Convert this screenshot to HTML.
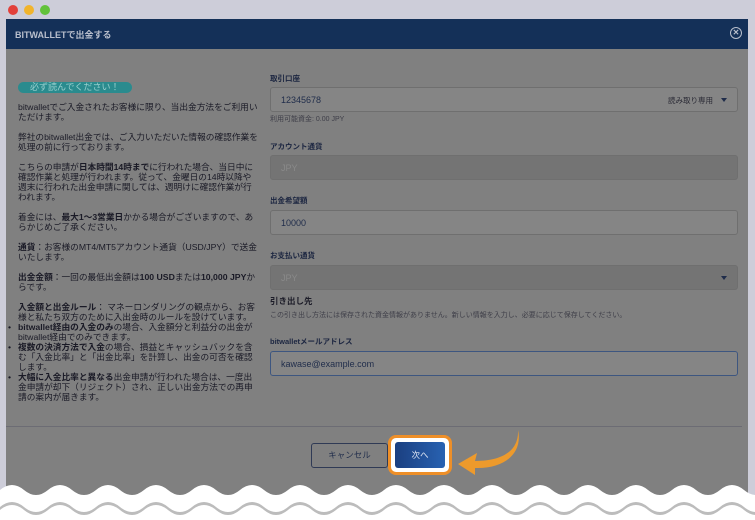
<!DOCTYPE html>
<html><head><meta charset="utf-8"><style>
*{margin:0;padding:0;box-sizing:border-box}
body{width:755px;height:520px;background:#cdcdd9;font-family:"Liberation Sans","Noto Sans CJK JP",sans-serif;position:relative;overflow:hidden;color:#1c1c28}
.dot{position:absolute;top:5px;width:10px;height:10px;border-radius:50%}
.win{position:absolute;left:6px;top:19px;width:742px;height:501px;background:#808080}
.hdr{position:absolute;left:0;top:0;width:742px;height:30px;background:#143058;color:#b9bfcc;font-size:9px;font-weight:bold;padding:9px 9px}
.close{position:absolute;right:6px;top:8px;width:12px;height:12px;border:1px solid #b9bfcc;border-radius:50%;color:#b9bfcc;font-size:8px;line-height:10px;text-align:center}
.left{position:absolute;left:12px;top:63px;width:242px;font-size:8.7px;line-height:10px;color:#1a1a26}
.left p{margin-bottom:10px}
.badge{display:inline-block;background:#2a8b8e;color:#9ad0cf;border-radius:7px;padding:0 12px;font-size:9px;line-height:11px;margin-bottom:9px}
ul{list-style:none}
li{position:relative}
li:before{content:"•";position:absolute;left:-10px}
.lbl{position:absolute;left:264px;font-size:7.5px;font-weight:bold;color:#1b2540}
.in{position:absolute;left:264px;width:468px;height:25px;background:#858585;border:1px solid #6f6f6f;border-radius:3px;font-size:9px;color:#1f2c4a;padding:7px 10px}
.dis{background:#747474;color:#8a8a8a}
.car{position:absolute;right:10px;top:10px;border:3.5px solid transparent;border-top:4px solid #1f2c4a}
.sm{position:absolute;left:264px;font-size:7.5px;color:#3e3e48}
</style></head><body>
<div class="dot" style="left:8px;background:#e2403a"></div>
<div class="dot" style="left:24px;background:#f1b42c"></div>
<div class="dot" style="left:40px;background:#62c23a"></div>
<div class="win">
<div class="hdr">BITWALLETで出金する<div class="close">✕</div></div>
<div class="left">
<div class="badge">必ず読んでください！</div>
<p>bitwalletでご入金されたお客様に限り、当出金方法をご利用いただけます。</p>
<p>弊社のbitwallet出金では、ご入力いただいた情報の確認作業を処理の前に行っております。</p>
<p>こちらの申請が<b>日本時間14時まで</b>に行われた場合、当日中に確認作業と処理が行われます。従って、金曜日の14時以降や週末に行われた出金申請に関しては、週明けに確認作業が行われます。</p>
<p>着金には、<b>最大1～3営業日</b>かかる場合がございますので、あらかじめご了承ください。</p>
<p><b>通貨</b>：お客様のMT4/MT5アカウント通貨（USD/JPY）で送金いたします。</p>
<p><b>出金金額</b>：一回の最低出金額は<b>100 USD</b>または<b>10,000 JPY</b>からです。</p>
<div><b>入金額と出金ルール</b>： マネーロンダリングの観点から、お客様と私たち双方のために入出金時のルールを設けています。</div>
<ul><li><b>bitwallet経由の入金のみ</b>の場合、入金額分と利益分の出金がbitwallet経由でのみできます。</li>
<li><b>複数の決済方法で入金</b>の場合、損益とキャッシュバックを含む「入金比率」と「出金比率」を計算し、出金の可否を確認します。</li>
<li><b>大幅に入金比率と異なる</b>出金申請が行われた場合は、一度出金申請が却下（リジェクト）され、正しい出金方法での再申請の案内が届きます。</li></ul>
</div>
<div class="lbl" style="top:54px">取引口座</div>
<div class="in" style="top:68px">12345678<span style="position:absolute;right:24px;top:7px;font-size:7.5px;color:#2a2a35">読み取り専用</span><div class="car"></div></div>
<div class="sm" style="top:95px;font-size:7px">利用可能資金: 0.00 JPY</div>
<div class="lbl" style="top:122px">アカウント通貨</div>
<div class="in dis" style="top:136px">JPY</div>
<div class="lbl" style="top:176px">出金希望額</div>
<div class="in" style="top:191px">10000</div>
<div class="lbl" style="top:231px">お支払い通貨</div>
<div class="in dis" style="top:246px">JPY<div class="car"></div></div>
<div class="lbl" style="top:276px;font-size:8.5px;color:#1c1c28">引き出し先</div>
<div class="sm" style="top:291px;font-size:7px">この引き出し方法には保存された資金情報がありません。新しい情報を入力し、必要に応じて保存してください。</div>
<div class="lbl" style="top:317px">bitwalletメールアドレス</div>
<div class="in" style="top:332px;border-color:#3d5680">kawase@example.com</div>
<div style="position:absolute;left:0;top:407px;width:736px;height:1px;background:#6c6c74"></div>
<div style="position:absolute;left:305px;top:424px;width:77px;height:25px;border:1px solid #2f3a55;border-radius:3px;font-size:8.5px;color:#1f2c4a;text-align:center;line-height:23px">キャンセル</div>
<div style="position:absolute;left:382px;top:416px;width:64px;height:40px;border:3px solid #ee8f28;border-radius:8px;background:#fff"></div>
<div style="position:absolute;left:389px;top:423px;width:50px;height:26px;background:linear-gradient(90deg,#1b3f80,#2862b2);border-radius:3px;color:#dfe6f4;font-size:8.5px;text-align:center;line-height:26px">次へ</div>
</div>
<svg style="position:absolute;left:455px;top:425px" width="70" height="50"><path d="M63 5 C64 24 50 36 20 36 L22 28 L3 39 L20 50 L20 43 C50 44 68 28 63 5Z" fill="#ed9a2c"/></svg>
<svg style="position:absolute;left:0;top:478px" width="755" height="42"><path d="M0 12 Q12 2 24 12 T48 12 T72 12 T96 12 T120 12 T144 12 T168 12 T192 12 T216 12 T240 12 T264 12 T288 12 T312 12 T336 12 T360 12 T384 12 T408 12 T432 12 T456 12 T480 12 T504 12 T528 12 T552 12 T576 12 T600 12 T624 12 T648 12 T672 12 T696 12 T720 12 T744 12 T768 12 L768 42 L0 42Z" fill="#fff"/><path d="M0 29 Q12 19 24 29 T48 29 T72 29 T96 29 T120 29 T144 29 T168 29 T192 29 T216 29 T240 29 T264 29 T288 29 T312 29 T336 29 T360 29 T384 29 T408 29 T432 29 T456 29 T480 29 T504 29 T528 29 T552 29 T576 29 T600 29 T624 29 T648 29 T672 29 T696 29 T720 29 T744 29 T768 29 L768 42 L0 42Z" fill="#bcbcbc"/><path d="M0 32 Q12 22 24 32 T48 32 T72 32 T96 32 T120 32 T144 32 T168 32 T192 32 T216 32 T240 32 T264 32 T288 32 T312 32 T336 32 T360 32 T384 32 T408 32 T432 32 T456 32 T480 32 T504 32 T528 32 T552 32 T576 32 T600 32 T624 32 T648 32 T672 32 T696 32 T720 32 T744 32 T768 32 L768 42 L0 42Z" fill="#fff"/></svg>
</body></html>
